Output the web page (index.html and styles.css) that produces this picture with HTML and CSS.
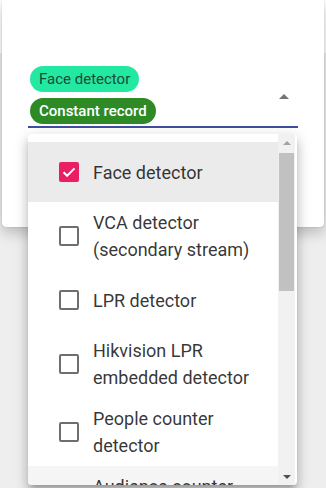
FILE: index.html
```html
<!DOCTYPE html>
<html lang="en">
<head>
    <meta charset="UTF-8">
    <meta name="viewport" content="width=device-width, initial-scale=1.0">
    <title>Detectors</title>
    <link rel="stylesheet" href="styles.css">
</head>
<body>
    <div class="page">
        <div class="dialog">
            <div class="select">
                <div class="chips">
                    <span class="chip chip-face">Face detector</span>
                    <span class="chip chip-record">Constant record</span>
                </div>
                <span class="select-arrow"></span>
            </div>
        </div>

        <div class="menu">
            <ul class="menu-list">
                <li class="menu-item selected">
                    <span class="checkbox checked">
                        <svg viewBox="0 0 20 20" width="20" height="20"><path d="M4.5 10.2l3.6 3.6 7.4-7.4" fill="none" stroke="#fff" stroke-width="2"/></svg>
                    </span>
                    <span class="item-text">Face detector</span>
                </li>
                <li class="menu-item">
                    <span class="checkbox"></span>
                    <span class="item-text">VCA detector (secondary stream)</span>
                </li>
                <li class="menu-item">
                    <span class="checkbox"></span>
                    <span class="item-text">LPR detector</span>
                </li>
                <li class="menu-item">
                    <span class="checkbox"></span>
                    <span class="item-text">Hikvision LPR embedded detector</span>
                </li>
                <li class="menu-item">
                    <span class="checkbox"></span>
                    <span class="item-text">People counter detector</span>
                </li>
                <li class="menu-item hovered">
                    <span class="checkbox"></span>
                    <span class="item-text">Audience counter detector</span>
                </li>
            </ul>
            <div class="scrollbar">
                <span class="scroll-btn"><span class="tri-up"></span></span>
                <div class="scroll-track">
                    <div class="scroll-thumb"></div>
                </div>
                <span class="scroll-btn"><span class="tri-down"></span></span>
            </div>
        </div>
    </div>
</body>
</html>
```

FILE: styles.css
```css
* {
    margin: 0;
    padding: 0;
    box-sizing: border-box;
}

body {
    font-family: Roboto, 'Noto Sans', sans-serif;
    background: linear-gradient(#ffffff 0, #ffffff 53px, #eeeeee 53px);
    color: rgba(0, 0, 0, 0.8);
    width: 326px;
    height: 488px;
    overflow: hidden;
}

.page {
    position: relative;
    height: 488px;
}

.dialog {
    margin: 0 2px;
    height: 227px;
    background-color: white;
    border-radius: 0 0 4px 4px;
    box-shadow: 0 0 1px rgba(0,0,0,0.35), 0 6px 14px rgba(0,0,0,0.22);
    padding: 66px 26px 0 26px;
}

.select {
    position: relative;
    padding: 0 0 2px 2px;
    border-bottom: 2px solid #3f4ea0;
}

.chips {
    display: flex;
    flex-direction: column;
    align-items: flex-start;
    gap: 6px;
}

.chip {
    height: 26px;
    line-height: 26px;
    padding: 0 9px;
    border-radius: 13px;
    font-size: 15px;
    white-space: nowrap;
}

.chip-face {
    background-color: #22e8a2;
    color: #1d4a36;
}

.chip-record {
    background-color: #2d8a25;
    color: white;
    font-weight: 500;
}

.select-arrow {
    position: absolute;
    right: 9px;
    top: 28px;
    width: 0;
    height: 0;
    border-left: 5px solid transparent;
    border-right: 5px solid transparent;
    border-bottom: 5px solid #757575;
}

.menu {
    position: absolute;
    left: 28px;
    top: 134px;
    width: 269px;
    height: 351px;
    background-color: white;
    border-radius: 4px;
    box-shadow: 0 5px 5px -3px rgba(0,0,0,0.2), 0 8px 10px 1px rgba(0,0,0,0.14), 0 3px 14px 2px rgba(0,0,0,0.12);
    display: flex;
    overflow: hidden;
}

.menu-list {
    list-style: none;
    flex: 1;
    padding-top: 8px;
}

.menu-item {
    display: flex;
    align-items: center;
    gap: 14px;
    min-height: 60px;
    padding: 7px 16px 7px 31px;
}

.menu-item.selected {
    background-color: #ebebeb;
}

.menu-item.hovered {
    background-color: #f5f5f5;
}

.checkbox {
    flex: none;
    width: 20px;
    height: 20px;
    border: 2.5px solid #6e6e6e;
    border-radius: 2px;
}

.checkbox.checked {
    border: none;
    background-color: #e91e63;
}

.checkbox svg {
    display: block;
}

.item-text {
    font-size: 18px;
    line-height: 27px;
}

.scrollbar {
    flex: none;
    width: 17px;
    margin-right: 2px;
    display: flex;
    flex-direction: column;
    background-color: #f1f1f1;
}

.scroll-btn {
    height: 17px;
    display: flex;
    align-items: center;
    justify-content: center;
}

.scroll-track {
    flex: 1;
}

.scroll-thumb {
    margin: 2px 1px 0 1px;
    height: 138px;
    background-color: #c1c1c1;
}

.tri-up,
.tri-down {
    width: 0;
    height: 0;
    border-left: 4px solid transparent;
    border-right: 4px solid transparent;
}

.tri-up {
    border-bottom: 4px solid #a3a3a3;
}

.tri-down {
    border-top: 4px solid #505050;
}
```
